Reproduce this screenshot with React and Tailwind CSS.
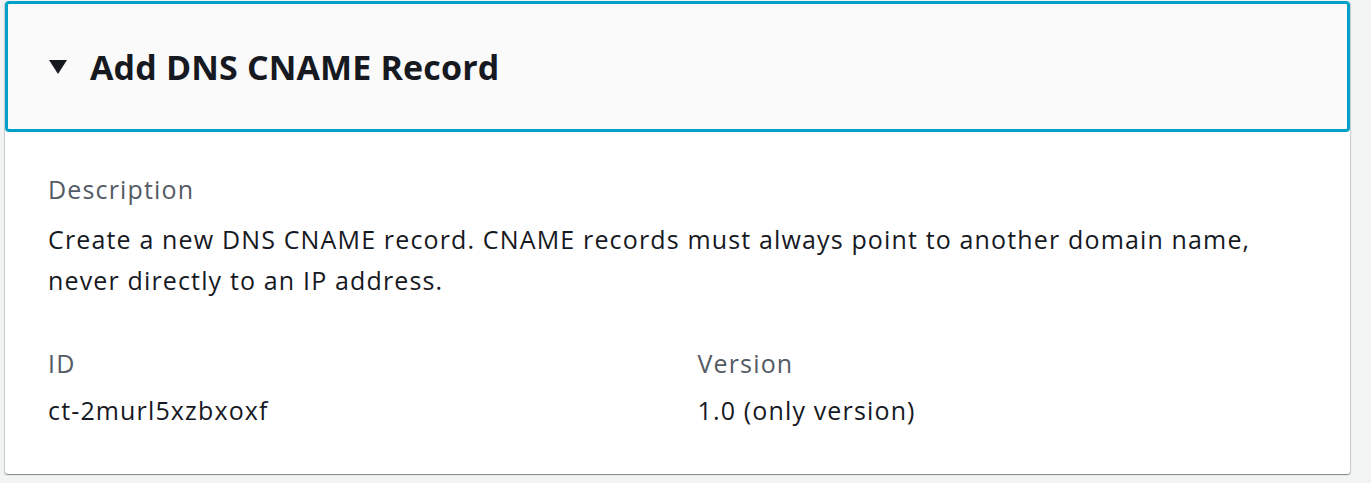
export default function App() {
  const font = { fontFamily: '"Open Sans", "Noto Sans", Arial, sans-serif' };
  return (
    <div className="w-full h-[483px] bg-[#f2f3f3] pt-px pl-[5px] pr-[21px]" style={font}>
      <div className="bg-white rounded-[3px] shadow-[0_1px_1px_0_rgba(0,28,36,0.3),1px_1px_1px_0_rgba(0,28,36,0.15),-1px_1px_1px_0_rgba(0,28,36,0.15)]">
        <div className="h-[131px] border-[3px] border-[#00a1c9] rounded-[4px] bg-[#fafafa] flex items-center pl-[40px]">
          <svg width="20" height="16" viewBox="0 0 20 16" className="mr-[22px]">
            <path d="M1 1 L19 1 L10 15 Z" fill="#16191f" />
          </svg>
          <h2 className="text-[34px] font-bold tracking-[0.15px] text-[#16191f] leading-none">Add DNS CNAME Record</h2>
        </div>
        <div className="px-[43px] pt-[39px] pb-[46px] text-[25px] tracking-[1.15px]">
          <div className="leading-[36px] text-[#545b64]">Description</div>
          <div className="mt-[12px] leading-[41px] text-[#16191f] max-w-[1250px]">
            Create a new DNS CNAME record. CNAME records must always point to another domain name, never directly to an IP address.
          </div>
          <div className="grid grid-cols-2 gap-x-[40px] mt-[44px]">
            <div>
              <div className="leading-[36px] text-[#545b64]">ID</div>
              <div className="mt-[11px] leading-[36px] text-[#16191f]">ct-2murl5xzbxoxf</div>
            </div>
            <div>
              <div className="leading-[36px] text-[#545b64]">Version</div>
              <div className="mt-[11px] leading-[36px] text-[#16191f]">1.0 (only version)</div>
            </div>
          </div>
        </div>
      </div>
    </div>
  );
}
